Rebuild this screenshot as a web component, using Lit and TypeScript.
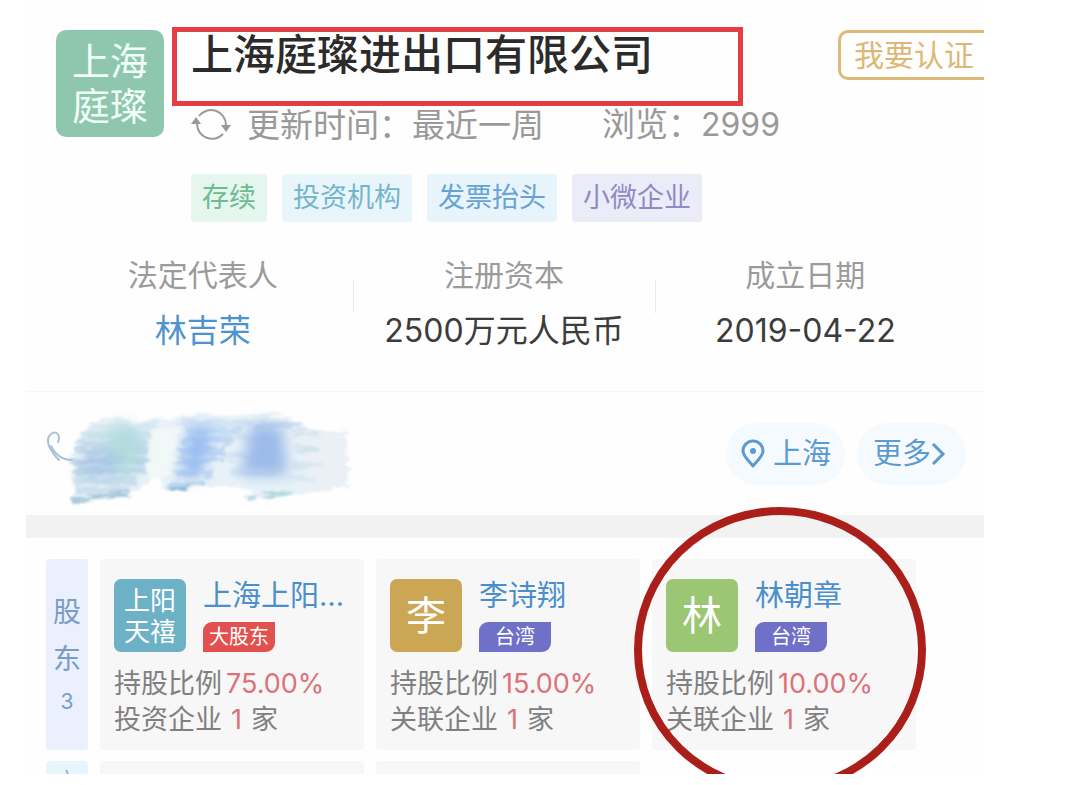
import { LitElement, html, css, svg, nothing } from "lit";
import { customElement, property } from "lit/decorators.js";

interface Holder {
  avatar: string[];
  tone: string;
  name: string;
  badge: string;
  badgeTone: string;
  share: string;
  relation: string;
  count: number;
  circled?: boolean;
}

const HOLDERS: Holder[] = [
  { avatar: ["上阳", "天禧"], tone: "teal", name: "上海上阳…", badge: "大股东", badgeTone: "red", share: "75.00%", relation: "投资企业", count: 1 },
  { avatar: ["李"], tone: "gold", name: "李诗翔", badge: "台湾", badgeTone: "violet", share: "15.00%", relation: "关联企业", count: 1 },
  { avatar: ["林"], tone: "lime", name: "林朝章", badge: "台湾", badgeTone: "violet", share: "10.00%", relation: "关联企业", count: 1, circled: true },
];

const TAGS = [
  { text: "存续", tone: "green" },
  { text: "投资机构", tone: "cyan" },
  { text: "发票抬头", tone: "blue" },
  { text: "小微企业", tone: "purple" },
];

@customElement("holder-card")
export class HolderCard extends LitElement {
  @property({ attribute: false }) holder!: Holder;

  static styles = css`
    :host { display: block; position: relative; box-sizing: border-box; padding: 20px 0 12px 14px; background: #f7f7f8; border-radius: 4px; }
    .top { display: flex; gap: 17px; height: 72px; }
    .avatar { flex: none; width: 72px; height: 73px; border-radius: 7px; color: #fff; display: flex; flex-direction: column; align-items: center; justify-content: center; font-size: 40px; line-height: 44px; }
    .avatar.pair { font-size: 26px; line-height: 31px; }
    .teal { background: #6cb1c6; }
    .gold { background: #cba655; }
    .lime { background: #9bc673; }
    .who { display: flex; flex-direction: column; align-items: flex-start; white-space: nowrap; }
    .name { color: #4a8fcb; font-size: 29px; line-height: 34px; text-decoration: none; }
    .badge { margin-top: 9px; width: 72px; text-align: center; font-size: 20px; line-height: 30px; color: #fff; border-radius: 9px 0 9px 0; }
    .red { background: #e2504f; }
    .violet { background: #6f70c8; }
    .fact { margin: 0; font-size: 27px; line-height: 36px; color: #808080; white-space: nowrap; }
    .top + .fact { margin-top: 15px; }
    .num { color: #dc7278; font-size: 27px; }
    .share { margin-left: 4px; }
    .count { margin: 0 9px; }
    .ring { position: absolute; left: -18px; top: -52px; width: 292px; height: 286px; overflow: visible; pointer-events: none; }
  `;

  render() {
    const h = this.holder;
    return html`
      <div class="top">
        <div class="avatar ${h.tone} ${h.avatar.length > 1 ? "pair" : ""}">${h.avatar.map((t) => html`<span>${t}</span>`)}</div>
        <div class="who">
          <a class="name" href="#">${h.name}</a>
          <span class="badge ${h.badgeTone}">${h.badge}</span>
        </div>
      </div>
      <p class="fact">持股比例<span class="num share">${h.share}</span></p>
      <p class="fact">${h.relation}<span class="num count">${h.count}</span>家</p>
      ${h.circled
        ? html`<svg class="ring" viewBox="0 0 292 286" aria-hidden="true"><ellipse cx="146" cy="143" rx="142" ry="139" fill="none" stroke="#aa1f1a" stroke-width="8" /></svg>`
        : nothing}
    `;
  }
}

/* Short horizontal brush dashes: x, y, length, colour */
const DASHES: [number, number, number, string][] = [
  [46, 28, 64, "#cfe2f1"], [38, 36, 66, "#bcd9e8"], [34, 44, 64, "#b0cfe4"], [30, 52, 70, "#abc8e4"],
  [28, 62, 70, "#a3c3e2"], [32, 72, 64, "#adcce5"], [28, 82, 60, "#b9d5e7"], [30, 91, 52, "#bdd7e5"],
  [134, 24, 70, "#c9def4"], [142, 32, 50, "#b6d2f4"], [138, 42, 46, "#abcaf2"], [136, 52, 40, "#a6c6f1"],
  [134, 62, 40, "#a9c8f1"], [130, 74, 36, "#b0cef1"], [126, 86, 30, "#aac9ec"], [182, 38, 34, "#cbdff1"],
  [182, 58, 34, "#cbdff0"], [188, 74, 40, "#cbdff1"], [212, 26, 40, "#bccfee"], [250, 34, 22, "#cadcee"],
  [252, 50, 18, "#c8dcea"], [250, 66, 20, "#cddfeb"], [246, 80, 22, "#d4e4ee"],
];

@customElement("app-root")
export class AppRoot extends LitElement {
  static styles = css`
    :host { display: block; min-height: 100vh; box-sizing: border-box; background: #fff; font-family: Inter, "Noto Sans CJK SC", sans-serif; }
    * { box-sizing: border-box; }
    button { font-family: inherit; margin: 0; cursor: pointer; }
    .screen { margin: 0 96px 0 26px; overflow: hidden; background: #fefefe; }
    .header { display: flex; align-items: flex-start; padding: 30px 0 0 30px; }
    .logo { flex: none; width: 108px; height: 107px; border-radius: 10px; background: #8fc6ae; color: #f0fff8; font-size: 38px; line-height: 45px; display: flex; flex-direction: column; align-items: center; justify-content: center; }
    .summary { flex: 1; min-width: 0; margin-left: 27px; white-space: nowrap; }
    .title { position: relative; width: fit-content; margin: 0; font-size: 42px; line-height: 50px; font-weight: 500; color: #2b2b2b; }
    .title::after { content: ""; position: absolute; left: -19px; right: -90px; top: -3px; bottom: -26px; border: 5px solid #e23f43; }
    .meta { display: flex; align-items: center; margin-top: 24px; font-size: 33px; line-height: 40px; color: #999; }
    .meta .sync { width: 40px; height: 36px; margin-right: 16px; }
    .visits { margin-left: 58px; }
    .visits span { font-size: 32px; }
    .tags { display: flex; gap: 15px; margin: 29px 0 0; padding: 0; list-style: none; }
    .tags li { padding: 0 11px; font-size: 27px; line-height: 48px; border-radius: 3px; }
    .green { color: #6dbb90; background: #e5f6ee; }
    .cyan { color: #75b5cb; background: #e8f5fa; }
    .blue { color: #66a3d3; background: #e8f4fc; }
    .purple { color: #8c8bc4; background: #ececf8; }
    .certify { flex: none; height: 50px; padding: 0 10px 0 13px; border: 3px solid #deb978; border-right: 0; border-radius: 10px 0 0 10px; background: #fff; color: #dcb878; font-size: 30px; line-height: 40px; }

    .info { display: grid; grid-template-columns: repeat(3, 1fr); margin: 0; padding: 35px 28px 40px 26px; border-bottom: 1px solid #f6f6f6; text-align: center; white-space: nowrap; }
    .cell { position: relative; }
    .cell + .cell::before { content: ""; position: absolute; left: 0; top: 23px; height: 33px; border-left: 1px solid #ebebeb; }
    .cell dt { font-size: 30px; line-height: 36px; color: #9b9b9b; }
    .cell dd { margin: 18px 0 0; font-size: 32px; line-height: 40px; color: #3c3c3c; }
    .cell a { color: #4e93cd; text-decoration: none; }

    .contact { display: flex; align-items: center; gap: 12px; height: 123px; padding: 0 18px 0 20px; }
    .smudge { width: 310px; height: 110px; margin-right: auto; overflow: visible; }
    .pill { display: flex; align-items: center; justify-content: center; height: 62px; border: 0; border-radius: 31px; background: #f5fafe; color: #5c9bcf; font-size: 29px; line-height: 36px; white-space: nowrap; }
    .place { padding: 0 14px; gap: 7px; }
    .more { padding: 0 20px 0 16px; }
    .band { height: 23px; background: #f2f2f2; }

    .holders { display: grid; grid-template-columns: 42px repeat(3, 1fr); column-gap: 12px; row-gap: 11px; padding: 21px 68px 0 20px; }
    .side { display: flex; flex-direction: column; align-items: center; padding-top: 30px; margin: 0; border-radius: 3px; background: #eaf0fe; color: #7b9cc5; font-size: 28px; line-height: 47px; font-weight: 400; }
    .side .total { font-size: 21px; line-height: 38px; }
    .peek { height: 13px; background: #f7f7f8; border-radius: 4px 4px 0 0; }
    .peek.tab { display: flex; justify-content: center; align-items: flex-end; background: #e9f5fc; }
  `;

  private smudge() {
    return svg`
      <svg class="smudge" viewBox="0 0 310 110" aria-hidden="true">
        <defs>
          <filter id="rough" x="-5%" y="-10%" width="110%" height="120%">
            <feTurbulence type="fractalNoise" baseFrequency="0.05 0.22" numOctaves="3" seed="7" result="n" />
            <feDisplacementMap in="SourceGraphic" in2="n" scale="14" xChannelSelector="R" yChannelSelector="G" />
            <feGaussianBlur stdDeviation="1.2" />
          </filter>
          <filter id="soft" x="-40%" y="-40%" width="180%" height="180%"><feGaussianBlur stdDeviation="7" /></filter>
        </defs>
        <g filter="url(#rough)">
          <path d="M54 20 L110 22 L140 17 L232 16 L256 24 L264 32 L300 32 L302 88 L262 94 L210 98 L196 86 L120 90 L112 76 L100 84 L78 96 L28 102 L26 84 L34 46 Z" fill="#e3eff6" opacity=".85" />
          <path d="M104 28 L134 28 L122 78 L100 78 Z" fill="#f1f8f8" />
          <path d="M262 32 L300 32 L302 88 L262 94 Z" fill="#eaf0f5" />
          ${DASHES.map(([x, y, w, c]) => svg`<path d="M${x} ${y} h${w}" stroke=${c} stroke-width="7" stroke-linecap="round" opacity=".65" />`)}
          <path d="M28 102 L82 94" stroke="#a9cbdc" stroke-width="4" stroke-linecap="round" />
          <path d="M122 90 H142" stroke="#93b9d8" stroke-width="4" stroke-linecap="round" />
          <path d="M202 99 L248 94" stroke="#b7d8e3" stroke-width="4" stroke-linecap="round" />
        </g>
        <g filter="url(#soft)">
          <ellipse cx="78" cy="50" rx="18" ry="26" fill="#aedbdb" opacity=".8" />
          <ellipse cx="54" cy="66" rx="20" ry="14" fill="#9fc0e3" opacity=".7" />
          <path d="M144 28 H168 L154 80 H134 Z" fill="#92baf0" opacity=".85" />
          <path d="M204 26 H236 L242 76 H194 L200 50 Z" fill="#9dbbe9" />
        </g>
        <path d="M12 43 C15 36 10 31 5 35 C-2 41 4 52 13 61 M5 47 C9 55 16 61 26 61" fill="none" stroke="#a9c2d7" stroke-width="2" stroke-linecap="round" />
      </svg>`;
  }

  render() {
    return html`
      <main class="screen">
        <header class="header">
          <div class="logo"><span>上海</span><span>庭璨</span></div>
          <div class="summary">
            <h1 class="title">上海庭璨进出口有限公司</h1>
            <div class="meta">
              <svg class="sync" viewBox="0 0 40 36" fill="none" stroke="#999" stroke-width="2" aria-hidden="true">
                <path d="M8 9 A15 15 0 0 1 35 18" />
                <path d="M32 27 A15 15 0 0 1 6 17" />
                <path d="M30 18 h10 l-5 7 Z M0 17 h10 l-5 -7 Z" fill="#999" stroke="none" />
              </svg>
              <span>更新时间：最近一周</span>
              <span class="visits">浏览：<span>2999</span></span>
            </div>
            <ul class="tags">${TAGS.map((t) => html`<li class=${t.tone}>${t.text}</li>`)}</ul>
          </div>
          <button class="certify" type="button">我要认证</button>
        </header>

        <dl class="info">
          <div class="cell"><dt>法定代表人</dt><dd><a href="#">林吉荣</a></dd></div>
          <div class="cell"><dt>注册资本</dt><dd>2500万元人民币</dd></div>
          <div class="cell"><dt>成立日期</dt><dd>2019-04-22</dd></div>
        </dl>

        <section class="contact">
          ${this.smudge()}
          <button class="pill place" type="button">
            <svg width="26" height="30" viewBox="0 0 26 30" fill="none" stroke="#5c9bcf" stroke-width="3" aria-hidden="true">
              <path d="M13 27 C8 21 3 17 3 12 A10 10 0 0 1 23 12 C23 17 18 21 13 27 Z" stroke-linejoin="round" />
              <circle cx="13" cy="12" r="3" fill="#5c9bcf" stroke="none" />
            </svg>
            上海
          </button>
          <button class="pill more" type="button">
            更多
            <svg width="15" height="26" viewBox="0 0 15 26" fill="none" stroke="#5c9bcf" stroke-width="3" aria-hidden="true"><path d="M2 3 L12 13 L2 23" /></svg>
          </button>
        </section>

        <div class="band"></div>

        <section class="holders">
          <h2 class="side"><span>股</span><span>东</span><span class="total">3</span></h2>
          ${HOLDERS.map((h) => html`<holder-card .holder=${h}></holder-card>`)}
          <div class="peek tab"><svg width="6" height="4" viewBox="0 0 6 4" aria-hidden="true"><path d="M2 0 L4 4" stroke="#8fb9cf" stroke-width="2" /></svg></div>
          <div class="peek"></div>
          <div class="peek"></div>
        </section>
      </main>
    `;
  }
}
